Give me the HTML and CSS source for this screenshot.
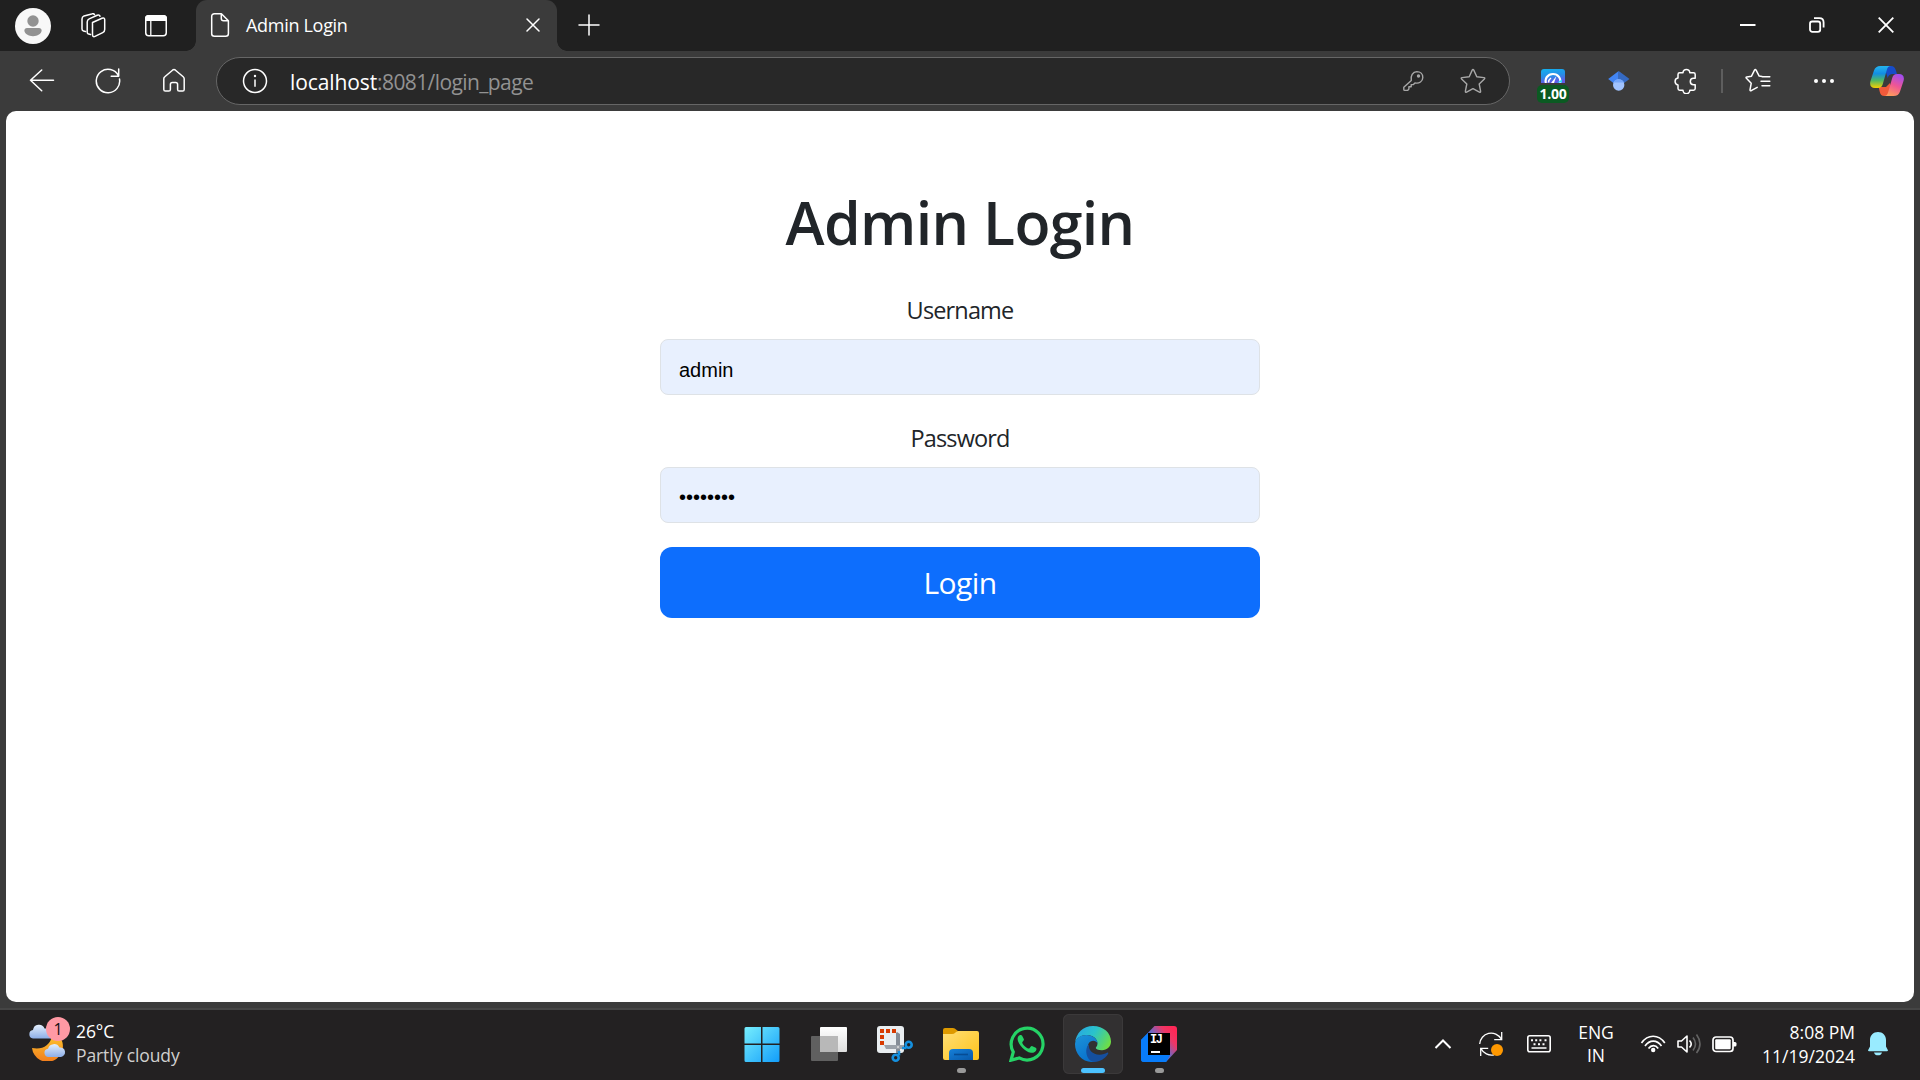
FILE: index.html
```html
<!DOCTYPE html>
<html lang="en">
<head>
<meta charset="utf-8">
<title>Admin Login</title>
<link rel="stylesheet" href="styles.css">
</head>
<body>
<header class="titlebar">
  <svg class="icon avatar" width="36" height="36" viewBox="0 0 36 36"><circle cx="18" cy="18" r="18" fill="#f8f8f8"/><circle cx="18" cy="13" r="5.7" fill="#929292"/><path d="M12 20h12c1.600 0 2.600 1 2.600 2.500 0 3.400-4.200 5.700-8.600 5.700s-8.600-2.300-8.600-5.700c0-1.500 1-2.500 2.600-2.500z" fill="#929292"/></svg>
  <svg class="icon line workspaces" width="26" height="26" viewBox="80 13 26 26"><path d="M92.500 22.500l9.500-4.200c1.600-.7 2.700 0 2.700 1.500v9.700c0 1.500-.7 2.500-2 3.100l-7.700 3.800c-1.500.7-2.500 0-2.500-1.600z"/><path d="M90.500 34.500l-1.800-.4c-1-.3-1.500-1-1.500-2.200V22c0-1.500.6-2.500 2-3.100l8-3.600c1.400-.6 2.400-.2 2.800 1"/><path d="M85.500 31.500l-2-.4c-1-.2-1.500-.9-1.500-2V19c0-1.500.6-2.500 2-3.100l7.700-2c1.400-.5 2.400-.2 2.800.7"/></svg>
  <svg class="icon tab-actions" width="22" height="22" viewBox="0 0 22 22"><rect x=".75" y=".75" width="20.500" height="20" rx="3" fill="none" stroke="#fff" stroke-width="1.500"/><path d="M0 6V3.500A3.500 3.500 0 0 1 3.500 0h15A3.500 3.500 0 0 1 22 3.500V6z" fill="#fff"/><path d="M5.800 5v16" stroke="#fff" stroke-width="1.300"/></svg>
  <div class="tab">
    <svg class="icon line" width="20" height="26" viewBox="210 13 20 26"><path d="M211.700 17.500c0-1.700 1-2.700 2.700-2.700h7l7 7v13c0 1.700-1 2.500-2.700 2.500h-11.300c-1.700 0-2.700-.8-2.700-2.500zM221.300 15v4.500c0 1.500.8 2.300 2.300 2.300h4.700"/></svg>
    <span class="tab-title">Admin Login</span>
    <svg class="icon line tab-close" width="14" height="14" viewBox="0 0 14 14"><path d="M1 1l12 12M13 1L1 13"/></svg>
  </div>
  <svg class="icon line new-tab" width="22" height="22" viewBox="0 0 22 22"><path d="M11 1v20M1 11h20"/></svg>
  <div class="window-controls">
    <svg class="icon" width="16" height="16" viewBox="0 0 16 16"><path d="M0 8h15.500" stroke="#fff" stroke-width="2"/></svg>
    <svg class="icon" width="16" height="16" viewBox="0 0 16 16"><g fill="none" stroke="#fff" stroke-width="1.800"><rect x="1" y="4.500" width="10.200" height="10.300" rx="2.300"/><path d="M5 1.200h5.300c2.700 0 4.300 1.700 4.300 4.300v5"/></g></svg>
    <svg class="icon" width="16" height="16" viewBox="0 0 16 16"><path d="M.7.700l14.600 14.600M15.300.7L.7 15.300" stroke="#fff" stroke-width="1.800"/></svg>
  </div>
</header>

<nav class="toolbar">
  <svg class="icon line back" width="26" height="24" viewBox="29 69 26 24"><path d="M53.500 80.300H30.500M41.700 70L30.500 80.300l11.200 10.500"/></svg>
  <svg class="icon line reload" width="26" height="26" viewBox="95 68 26 26"><path d="M119.500 79a11.700 11.700 0 1 1-9-9.400M118.700 69v7.200h-7.500M118.500 76a11.700 11.700 0 0 0-8-6.400"/></svg>
  <svg class="icon line home" width="24" height="26" viewBox="162 68 24 26"><path d="M163.800 78.800c0-.8.300-1.500 1-2l7.700-6.600c1-.8 2-.8 3 0l7.700 6.600c.6.500 1 1.200 1 2v10.600c0 1-.6 1.600-1.600 1.600h-3.400c-1 0-1.600-.6-1.600-1.600v-4.900c0-1.200-.7-2-1.900-2h-3.400c-1.200 0-1.900.8-1.900 2v4.900c0 1-.6 1.600-1.600 1.600h-3.400c-1 0-1.600-.6-1.600-1.600z"/></svg>
  <div class="address">
    <svg class="icon line info" width="26" height="26" viewBox="0 0 26 26"><circle cx="13" cy="13" r="11.500"/><path d="M13 11.500v7.300" stroke-linecap="butt"/><circle cx="13" cy="8" r="1.200" fill="#fff" stroke="none"/></svg>
    <span class="url"><span class="host">localhost</span><span class="path">:8081/login_page</span></span>
    <svg class="icon dim key" width="22" height="22" viewBox="1402 70 22 22"><path d="M1411.300 80.500c-1-4.500 1.500-8.800 5.500-8.900 3.600 0 6 2.500 6 5.800 0 4-3.600 6.400-7.800 5.500l-1.600 1.700h-2.200v2.200h-2.300v2.300l-1.300 1.300h-2.800c-.7 0-1-.4-1-1v-2.200z"/><circle cx="1418.500" cy="76" r="1" fill="#aaa"/></svg>
    <svg class="icon dim star" width="26" height="26" viewBox="1460 68 26 26"><path d="M1472.200 70.100q.8-1.300 1.600 0l3 6.600 7.100.9q1.500.3.500 1.400l-5.200 5 1.400 7.200q.1 1.500-1.200.9l-6.400-3.500-6.400 3.500q-1.300.6-1.200-.9l1.400-7.200-5.200-5q-1-1.100.5-1.400l7.100-.9z"/></svg>
  </div>
  <div class="extension">
    <svg class="icon" width="24" height="14" viewBox="0 0 24 14"><defs><linearGradient id="speed" x2="0.250" y2="1"><stop stop-color="#12b2ee"/><stop offset=".55" stop-color="#268fe8"/><stop offset="1" stop-color="#625be6"/></linearGradient></defs><path d="M0 14V3q0-3 3-3h18q3 0 3 3v11z" fill="url(#speed)"/><path d="M5 14c-1.500-4 1.500-9 7-9 5 0 8.500 4.500 7 9" fill="none" stroke="#fff" stroke-width="2.200"/><path d="M10 14l5.500-7-2.500 7z" fill="#fff"/><path d="M7.500 13.500c0-2 1-3.500 2.500-4.500" fill="none" stroke="#fff" stroke-width="1.500"/><path d="M16 13.500l5-3v3z" fill="#28d9f7"/></svg>
    <span class="rate">1.00</span>
  </div>
  <svg class="icon scholar" width="22" height="22" viewBox="1608 70 22 22"><path d="M1618.700 71l-10.500 8 10.500 8z" fill="#4285f4"/><path d="M1618.700 71l10.800 8-10.800 8z" fill="#356ac3"/><circle cx="1618.700" cy="85" r="5.700" fill="#a0c3ff"/><path d="M1613.400 82.500a6 6 0 0 1 10.600 0z" fill="#76a7fa"/></svg>
  <svg class="icon line puzzle" width="24" height="26" viewBox="1674 68 24 26"><path d="M1683 72.800a3.400 3.400 0 1 1 6.800 0h3.700c1 0 1.700.7 1.700 1.700v3.800h-1.700a3.100 3.100 0 0 0 0 6.400h1.700v3.900c0 1-.7 1.700-1.700 1.700h-3.700a3.400 3.400 0 0 1-6.800 0h-3.300c-1 0-1.700-.7-1.700-1.700v-3.700a3.500 3.500 0 0 1 0-6.900v-3.500c0-1 .7-1.700 1.700-1.700z"/></svg>
  <span class="divider"></span>
  <svg class="icon line favorites" width="26" height="26" viewBox="1745 69 26 26"><path d="M1762 77.500l-2.800-.4-3.100-5.900q-.8-1.300-1.600 0l-3 6-4.700.8q-1.300.3-.4 1.300l4.800 5-1.200 6.500q0 1.400 1.200.9l6-3.300M1762.300 77.700h7.500M1761 82.200h8.800M1762 86.800h7.800"/></svg>
  <svg class="icon more" width="22" height="6" viewBox="0 0 22 6"><g fill="#fff"><circle cx="3" cy="3" r="2"/><circle cx="11" cy="3" r="2"/><circle cx="19" cy="3" r="2"/></g></svg>
  <svg class="icon copilot" width="34" height="32" viewBox="0 0 34 32">
    <defs><linearGradient id="cpL" x2="0" y2="1"><stop stop-color="#25b5ef"/><stop offset=".35" stop-color="#128de2"/><stop offset=".65" stop-color="#4eb765"/><stop offset="1" stop-color="#f6d000"/></linearGradient><linearGradient id="cpR" x1=".7" x2=".3" y2="1"><stop stop-color="#a24df0"/><stop offset=".5" stop-color="#ef5694"/><stop offset="1" stop-color="#ff9e5b"/></linearGradient></defs>
    <path d="M11 1h10c3 0 4 1.700 4.800 4.300L27 9h-4c-3 0-4.500 1.300-5.300 4L14 1z" fill="#174cc9"/>
    <path d="M8 22h8l4-4 1.500 13h-7c-3 0-4-1.500-4.700-4l-.6-2.500C9 23 9 22 8 22z" fill="#f25a3a"/>
    <path d="M10.500 1H21c-2.500 0-3.500 1.500-4.200 4l-4 14c-.8 2.500-2 4-5 4H5c-4 0-5.700-2.500-4.500-7L4 5.500C5 2.500 7 1 10.500 1z" fill="url(#cpL)"/>
    <path d="M23.500 31H14c2.500 0 3.500-1.500 4.200-4l4-14c.8-2.500 2-4 5-4H29c4 0 5.700 2.500 4.500 7L30 26.500c-1 3-3 4.500-6.500 4.500z" fill="url(#cpR)"/>
  </svg>
</nav>

<main class="page">
  <form class="login">
    <h1><span>Admin Login</span></h1>
    <label class="label-user"><span>Username</span></label>
    <div class="field">admin</div>
    <label class="label-pass"><span>Password</span></label>
    <div class="field dots">••••••••</div>
    <button type="button"><span>Login</span></button>
  </form>
</main>

<footer class="taskbar">
  <div class="weather">
    <svg class="icon" width="38" height="46" viewBox="28 1015 38 46">
      <defs><linearGradient id="moon" x2="0" y2="1"><stop stop-color="#fdc32c"/><stop offset="1" stop-color="#f27d1d"/></linearGradient><linearGradient id="cloud" x2="0" y2="1"><stop stop-color="#e3effc"/><stop offset="1" stop-color="#8daee8"/></linearGradient></defs>
      <path d="M59 1036a15.500 15.500 0 1 1-27 12c10 2 18-2 20-12z" fill="url(#moon)"/>
      <path d="M33 1038.500a4.300 4.300 0 0 1 0-8.500 6 6 0 0 1 11.500-1.500h7v10z" fill="url(#cloud)"/>
      <path d="M48 1057a4.200 4.200 0 0 1 0-8.300 6.200 6.200 0 0 1 11.500-1.200 4.800 4.800 0 0 1 1.500 9.500z" fill="url(#cloud)"/>
    </svg>
    <span class="count">1</span>
    <div class="weather-text"><span class="temp">26°C</span><span class="sky">Partly cloudy</span></div>
  </div>

  <div class="apps">
    <div class="app"><svg class="icon" width="36" height="36" viewBox="0 0 36 36"><defs><linearGradient id="win" x2="1" y2="1"><stop stop-color="#76eefd"/><stop offset="1" stop-color="#129dfa"/></linearGradient></defs><path d="M2 1h15v16.500H.5v-15Q.5 1 2 1zM18.500 1H34q1.500 0 1.500 1.500v15h-17zM.5 19H17v17H2q-1.500 0-1.500-1.500zM18.500 19h17v15.500Q35.500 36 34 36H18.500z" fill="url(#win)"/></svg></div>
    <div class="app"><svg class="icon" width="38" height="36" viewBox="0 0 38 36"><defs><linearGradient id="tv" x2="0" y2="1"><stop stop-color="#fff"/><stop offset="1" stop-color="#dedede"/></linearGradient></defs><rect x="10" y="1" width="27" height="25" rx="1" fill="url(#tv)"/><rect x="1" y="10" width="27" height="25" rx="1" fill="#606060"/><path d="M10 10h18v16H10z" fill="#b8b8b8"/></svg></div>
    <div class="app"><svg class="icon" width="38" height="38" viewBox="876 1025 38 38"><rect x="877" y="1026" width="27" height="27" rx="3" fill="#e9eef1"/><g fill="#d83b01"><path d="M880 1029h4v4h-4zM886 1029h4v4h-4zM892 1029h4v4h-4zM880 1035h4v4h-4zM880 1041h4v4h-4z"/></g><path d="M897 1032l3 2v19h-4v-20z" fill="#858d97"/><path d="M884 1045h20v4h-18z" fill="#9ba2aa"/><circle cx="898" cy="1047" r="1" fill="#ddd"/><g fill="none" stroke="#1590df" stroke-width="2.600"><circle cx="908.700" cy="1044.700" r="3"/><circle cx="895.700" cy="1057.700" r="3"/><path d="M902 1048h4.500M899 1051v4.500"/></g></svg></div>
    <div class="app"><svg class="icon" width="36" height="36" viewBox="0 0 36 36"><defs><linearGradient id="fold" x2="1" y2="1"><stop stop-color="#ffdf76"/><stop offset="1" stop-color="#ffc31a"/></linearGradient><linearGradient id="tray" x2="1" y2="1"><stop stop-color="#1680d9"/><stop offset="1" stop-color="#0858a9"/></linearGradient></defs><path d="M0 9V4q0-2 2-2h8q2 0 3 1.500L15 5l-3 4z" fill="#de9a00"/><path d="M0 8h9q2 0 3.500-1.500T15 5h19q2 0 2 2v25q0 2-2 2H2q-2 0-2-2z" fill="url(#fold)"/><path d="M6 34v-7q0-4 4-4h16q4 0 4 4v7z" fill="url(#tray)"/><path d="M11 28.500h14" stroke="#064c94" stroke-width="1.600"/></svg><i class="running"></i></div>
    <div class="app"><svg class="icon" width="36" height="36" viewBox="0 0 36 36"><path d="M2 34.200L4.300 26A15.900 15.900 0 1 1 10.200 31.900z" fill="none" stroke="#25d366" stroke-width="3.200"/><path d="M13 9.600c-.6-1-1.300-.7-2-.6-1.600.4-2.800 2.700-2.300 5 .8 4.600 7.300 12 13.200 12.800 2.500.3 5.200-1.100 5.500-3.100.2-1.200-.1-1.500-.7-1.900l-3.300-1.600c-.7-.3-1.100-.2-1.600.4l-1.300 1.600c-.4.500-.9.500-1.500.2-2.400-1.100-4.300-2.900-5.600-5.200-.3-.6-.2-1 .2-1.400l1-1.200c.4-.5.5-.9.200-1.500z" fill="#25d366"/></svg></div>
    <div class="app active"><svg class="icon" width="36" height="36" viewBox="0 0 36 36"><defs><linearGradient id="eTop" x1="0" y1=".3" x2="1" y2=".7"><stop stop-color="#28a8e2"/><stop offset=".45" stop-color="#2ac3cb"/><stop offset=".8" stop-color="#55d573"/><stop offset="1" stop-color="#72df3f"/></linearGradient><linearGradient id="eLow" x2=".5" y2="1"><stop stop-color="#1d93d8"/><stop offset="1" stop-color="#0871cd"/></linearGradient></defs><path d="M0 17C1 7 8 0 18 0c10.500 0 18 7 18 15.500 0 5-4 8.700-9 8.700-4 0-6.200-1.200-6.200-2.300 0-1 1.700-1.500 1.700-4.400 0-4.600-4.700-8.500-10.500-8.500C6 9 1 12 0 17z" fill="url(#eTop)"/><path d="M0 18C.5 12 5.500 9 11.500 9c6 0 10.900 3.700 11 8.400-1.200-2.500-4-3.600-7-2-5 3-3.500 15.600 5 20.400-12 1.700-20.500-7-20.500-17.800z" fill="url(#eLow)"/><path d="M14 18.500c-1 5 3.500 10.200 10.500 10.200 3.300 0 5.700-1.100 7.500-2 1-.5 1.700.3 1 1.400C30 32.700 25 36 19.500 36 11 35.500 9 22 14 18.500z" fill="#154f9f"/></svg><i class="running"></i></div>
    <div class="app"><svg class="icon" width="36" height="36" viewBox="0 0 36 36"><defs><linearGradient id="ij" x1=".1" y1=".7" x2=".9" y2=".1"><stop offset=".2" stop-color="#087cfa"/><stop offset=".5" stop-color="#7763bd"/><stop offset=".78" stop-color="#ed3767"/><stop offset="1" stop-color="#fe2857"/></linearGradient></defs><path d="M13.500 0H33q3 0 3 3v21L25 36H3q-3 0-3-3V14z" fill="url(#ij)"/><path d="M0 14l7-7v22h22l-4 7H3q-3 0-3-3z" fill="#087cfa"/><path d="M7 7h22v22H7z" fill="#000"/><path d="M10 26h9" stroke="#fff" stroke-width="2"/></svg><b class="ij-mark">IJ</b><i class="running"></i></div>
  </div>

  <div class="tray">
    <svg class="icon chevron" width="18" height="12" viewBox="0 0 18 12"><path d="M1.500 10L9 2.500l7.500 7.500" fill="none" stroke="#fff" stroke-width="2"/></svg>
    <svg class="icon sync" width="26" height="26" viewBox="1478 1031 26 26"><g fill="none" stroke="#fff" stroke-width="1.300"><path d="M1479.700 1044a11.500 11.500 0 0 1 21.500-5M1501.700 1032v7.700h-7.500M1480.700 1056v-7.700h7.500M1481 1048.500a11.500 11.500 0 0 0 13 6.300"/></g><circle cx="1497" cy="1050" r="6" fill="#ff9800"/></svg>
    <svg class="icon keyboard" width="24" height="18" viewBox="0 0 24 18"><rect x=".8" y=".8" width="22.400" height="16" rx="2" fill="none" stroke="#fff" stroke-width="1.600"/><g fill="#fff"><path d="M4 4.300h2v2H4zM8.200 4.300h2v2h-2zM12.400 4.300h2v2h-2zM17.500 4.300h2v2h-2zM6.500 8.300h2v2h-2zM11 8.300h2v2h-2zM15.500 8.300h2v2h-2zM4.500 12.300h15v1.500h-15z"/></g></svg>
    <div class="lang"><span>ENG</span><span>IN</span></div>
    <svg class="icon wifi" width="26" height="20" viewBox="1640 1034 26 20"><g fill="none" stroke="#fff" stroke-width="1.700"><path d="M1641.500 1043c6.300-9 17-9 23.300 0M1645 1046c4.500-6.500 12-6.500 16.500 0M1648.500 1048.500c2.800-3.800 7-3.800 9.700 0"/></g><circle cx="1653.200" cy="1050" r="2.200" fill="#fff"/></svg>
    <svg class="icon speaker" width="26" height="20" viewBox="1676 1034 26 20"><g fill="none" stroke-width="1.600"><path d="M1678 1041h3.500l5.500-5v16l-5.500-5h-3.500z" stroke="#fff" stroke-linejoin="round"/><path d="M1689.500 1040.500q3.500 3.500 0 7" stroke="#fff"/><path d="M1693 1037.500q5 6.500 0 13M1696.500 1034.500q7 9.500 0 18.500" stroke="#646464"/></g></svg>
    <svg class="icon battery" width="25" height="17" viewBox="0 0 25 17"><rect x="1" y="1" width="20" height="14.500" rx="3" fill="none" stroke="#fff" stroke-width="1.700"/><rect x="3.200" y="3.300" width="15.500" height="10" rx="1" fill="#fff"/><path d="M21 6h2q1.500 0 1.500 1.500V9q0 1.500-1.500 1.500h-2z" fill="#fff"/></svg>
    <div class="clock"><span class="time">8:08 PM</span><span class="date">11/19/2024</span></div>
    <svg class="icon bell" width="20" height="24" viewBox="0 0 20 24"><path d="M10 0c4.700 0 8 3.300 8 8v6.500l1.700 3.200c.5 1 .2 1.600-.8 1.600H1.100c-1 0-1.300-.6-.8-1.600L2 14.500V8c0-4.700 3.300-8 8-8zM6 20.500h8c-.5 2-2 2.800-4 2.800s-3.500-.8-4-2.800z" fill="#99ebff"/></svg>
  </div>
</footer>
</body>
</html>
```
FILE: styles.css
```css
* { box-sizing: border-box; }

body {
  margin: 0;
  width: 1920px;
  height: 1080px;
  overflow: hidden;
  display: flex;
  flex-direction: column;
  background: #3b3b3b;
  color: #fff;
  font-family: "Open Sans", "Noto Sans", sans-serif;
  font-size: 18px;
}

.icon { display: block; flex: none; }
.line { fill: none; stroke: #fff; stroke-width: 1.5; stroke-linejoin: round; stroke-linecap: round; }
.dim { fill: none; stroke: #a8a8a8; stroke-width: 1.4; stroke-linejoin: round; }
span { white-space: nowrap; }

/* Title bar */
.titlebar { flex: none; height: 51px; display: flex; align-items: center; background: #202020; }
.avatar { margin-left: 15px; }
.workspaces { margin-left: 29px; }
.tab-actions { margin-left: 39px; }
.tab {
  position: relative;
  width: 361px;
  height: 51px;
  margin-left: 29px;
  padding: 0 17px 1px 14px;
  display: flex;
  align-items: center;
  background: #3b3b3b;
  border-radius: 11px 11px 0 0;
}
.tab::before, .tab::after { content: ""; position: absolute; bottom: 0; width: 10px; height: 10px; }
.tab::before { left: -10px; background: radial-gradient(circle at 0 0, transparent 9.5px, #3b3b3b 10px); }
.tab::after { right: -10px; background: radial-gradient(circle at 100% 0, transparent 9.5px, #3b3b3b 10px); }
.tab-title { margin-left: 16px; letter-spacing: -0.3px; }
.tab-close { margin-left: auto; }
.new-tab { margin: 0 0 2px 21px; }
.window-controls { margin-left: auto; padding: 0 26px 1px 0; display: flex; gap: 53px; }

/* Toolbar */
.toolbar { flex: none; height: 60px; display: flex; align-items: center; }
.back { margin-left: 29px; }
.reload { margin-left: 40px; }
.home { margin-left: 41px; }
.address {
  width: 1294px;
  height: 48px;
  margin-left: 30px;
  padding: 0 23px 0 25px;
  display: flex;
  align-items: center;
  background: #282828;
  border: 1.5px solid #666;
  border-radius: 24px;
}
.url { margin: 1px 0 0 22px; font-size: 21px; }
.host { letter-spacing: -0.1px; }
.path { color: #929292; letter-spacing: -0.6px; }
.key { margin-left: auto; }
.star { margin-left: 36px; }
.extension { width: 32px; height: 34px; margin: 10px 0 0 27px; display: flex; flex-direction: column; align-items: center; gap: 2px; }
.rate {
  width: 32px;
  height: 18px;
  border-radius: 5px;
  background: #0b5a22;
  font: bold 14px/18px "Open Sans", sans-serif;
  letter-spacing: -0.2px;
  text-align: center;
}
.scholar { margin-left: 39px; }
.puzzle { margin-left: 44px; }
.divider { width: 2px; height: 24px; margin-left: 23px; background: #5e5e5e; }
.favorites { margin-left: 22px; }
.more { margin-left: 42px; }
.copilot { margin-left: 35px; }

/* Page */
.page {
  flex: none;
  width: 1908px;
  height: 891px;
  margin: 0 6px;
  background: #fff;
  border-radius: 10px;
  color: #212529;
}
.login { width: 600px; margin: 0 auto; padding-top: 75px; display: flex; flex-direction: column; text-align: center; }
h1 { margin: 0 0 34px; font-size: 59px; line-height: 72px; font-weight: 600; }
h1 span { letter-spacing: -0.65px; }
label { font-size: 23.5px; line-height: 36px; margin-bottom: 11px; letter-spacing: -0.85px; }
.label-pass { margin-top: 25px; }
.field {
  height: 56px;
  padding: 3px 18px 0;
  border: 1px solid #dee2e6;
  border-radius: 8px;
  background: #e8f0fe;
  color: #000;
  font: 20px/54px "Liberation Sans", Arial, sans-serif;
  text-align: left;
}
.dots { padding-top: 2px; }
button {
  height: 71px;
  margin-top: 24px;
  padding: 1px 0 0;
  border: 0;
  border-radius: 12px;
  background: #0d6efd;
  color: #fff;
  font: 30px/70px "Open Sans", sans-serif;
  letter-spacing: -0.6px;
}

/* Taskbar */
.taskbar {
  flex: none;
  height: 72px;
  margin-top: 6px;
  display: grid;
  grid-template-columns: 732px 456px 1fr;
  background: #232122;
  border-top: 2px solid #454545;
}
.weather { position: relative; display: flex; padding-left: 28px; align-items: flex-start; }
.weather .icon { margin-top: 5px; }
.count {
  position: absolute;
  left: 46px;
  top: 7px;
  width: 24px;
  height: 24px;
  border-radius: 50%;
  background: #ff99a4;
  color: #111;
  font-size: 16px;
  line-height: 24px;
  text-align: center;
}
.weather-text { margin-left: 10px; padding-top: 9px; display: flex; flex-direction: column; font-size: 17.5px; line-height: 24px; letter-spacing: -0.1px; }
.sky { color: #cfcfcf; }
.apps { display: flex; gap: 6px; padding: 4px 0 0 1px; }
.app { position: relative; flex: none; width: 60px; height: 60px; display: flex; align-items: center; justify-content: center; border-radius: 6px; }
.app:first-child .icon { margin-right: 2px; }
.active { background: #323031; box-shadow: inset 0 0 0 1px #3b393a; }
.running { position: absolute; left: 26px; bottom: 1px; width: 9px; height: 5px; border-radius: 3px; background: #999; }
.active .running { left: 18px; width: 24px; background: #4cc2ff; }
.ij-mark { position: absolute; left: 21px; top: 18px; font: bold 12px/16px "Liberation Mono", monospace; letter-spacing: -1.5px; }
.tray { display: flex; align-items: center; padding-left: 246px; height: 68px; }
.sync { margin-left: 26px; }
.keyboard { margin-left: 23px; }
.lang { width: 34px; margin-left: 28px; display: flex; flex-direction: column; align-items: center; font-size: 17.5px; line-height: 23px; }
.wifi { margin-left: 27px; }
.speaker { margin-left: 10px; }
.battery { margin-left: 10px; }
.clock { width: 118px; padding-bottom: 1px; display: flex; flex-direction: column; align-items: flex-end; font-size: 17.5px; line-height: 24px; }
.bell { margin-left: 13px; }
```
